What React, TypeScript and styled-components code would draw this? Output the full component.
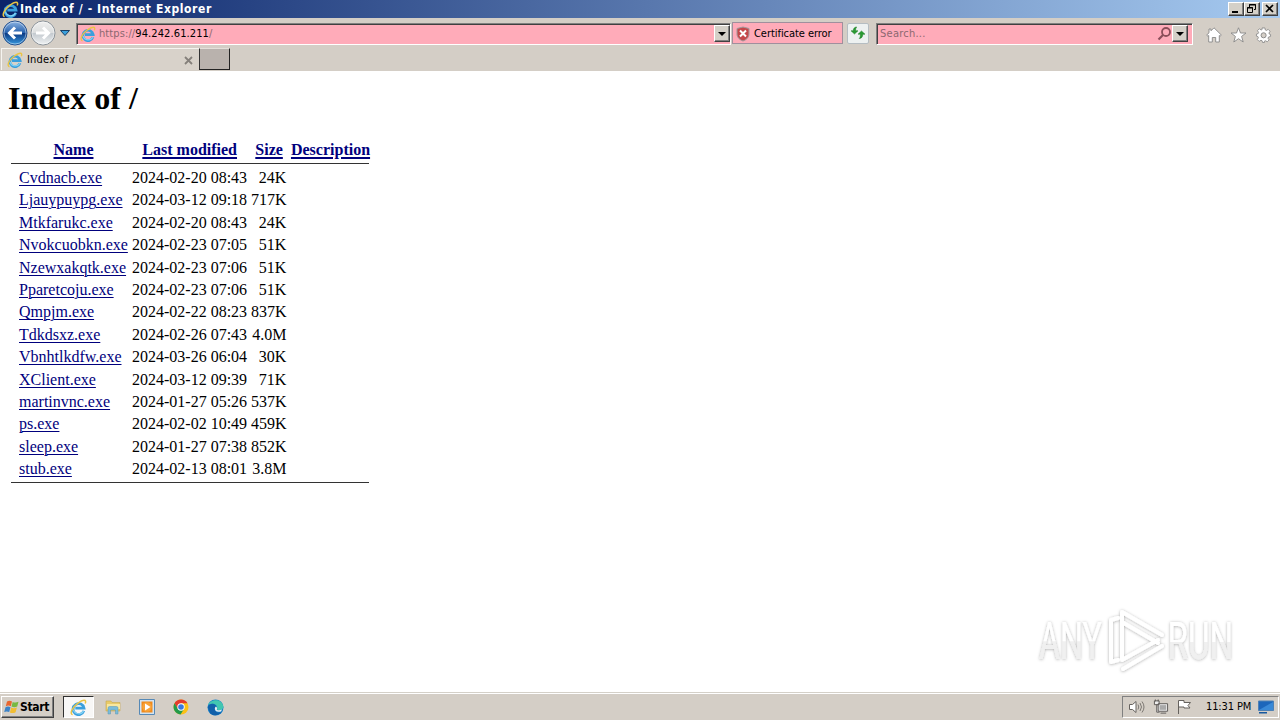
import React from "react";
import styled, { createGlobalStyle } from "styled-components";

const Global = createGlobalStyle`
  *{box-sizing:border-box}
  html,body{margin:0;padding:0}
  body{background:#fff;overflow:hidden}
`;
const ui = `"Tahoma","DejaVu Sans Condensed","DejaVu Sans",sans-serif`;

const Screen = styled.div`
  width:1280px;height:720px;display:flex;flex-direction:column;position:relative;
  background:#fff;overflow:hidden;font-family:${ui};font-size:11px;color:#000;
`;
const TitleBar = styled.header`
  height:18px;display:flex;align-items:center;padding:0 2px;flex:none;
  background:linear-gradient(90deg,#0a246a 0%,#0a246a 1%,#a6caf0 100%);
`;
const Label = styled.span<{ $ls?: number; $size?: number; $color?: string; $bold?: boolean; $ml?: number }>`
  white-space:pre;line-height:14px;margin-left:${p => p.$ml ?? 0}px;
  font-size:${p => p.$size ?? 11}px;letter-spacing:${p => p.$ls ?? 0}px;
  color:${p => p.$color ?? "#000"};font-weight:${p => (p.$bold ? 700 : 400)};
`;
const Spacer = styled.div`flex:1;`;
const WinButton = styled.div<{ $gap?: number }>`
  width:16px;height:14px;margin-left:${p => p.$gap ?? 0}px;background:#d4d0c8;
  border:1px solid;border-color:#fff #404040 #404040 #fff;box-shadow:inset -1px -1px #808080;
  display:flex;
`;
const NavBar = styled.nav`
  height:30px;flex:none;background:#d4cec6;display:flex;align-items:center;padding:0 7px 0 2px;
`;
const History = styled.div`display:flex;align-items:center;gap:2px;padding-right:2px;`;
const Field = styled.div<{ $w: number; $ml: number; $pr: number }>`
  width:${p => p.$w}px;height:22px;margin-left:${p => p.$ml}px;margin-top:1px;background:#ffabb9;
  border:1px solid;border-color:#808080 #fff #fff #808080;box-shadow:inset 1px 1px #404040;
  display:flex;align-items:center;padding:1px ${p => p.$pr}px 0 3px;
`;
const DropButton = styled.div`
  width:16px;height:17px;margin-top:-1px;background:#d4d0c8;border:1px solid;border-color:#fff #404040 #404040 #fff;
  box-shadow:inset -1px -1px #808080;display:flex;align-items:center;justify-content:center;
  &::after{content:"";border:4px solid transparent;border-top-color:#000;border-bottom:0;}
`;
const Certificate = styled.div`
  width:111px;height:22px;margin:0 0 0 1px;background:#ffabb9;border:1px solid #a08f9d;
  display:flex;align-items:center;gap:4px;padding:1px 0 0 3px;
`;
const Refresh = styled.div`
  width:22px;height:21px;margin:0 0 0 4px;border:1px solid #b5bdc2;border-radius:2px;background:#edf1f1;
  display:flex;align-items:center;justify-content:center;
`;
const Tools = styled.div`display:flex;align-items:center;gap:8px;margin:4px 0 0 13px;`;
const TabRow = styled.div`
  height:23px;flex:none;background:#d4cec6;display:flex;align-items:flex-start;
`;
const Tab = styled.div`
  width:199px;height:22px;display:flex;align-items:center;padding:1px 6px 0 5px;gap:4px;
  background:#d8d2ca;border-top:1px solid #f6f4f0;border-left:1px solid #f6f4f0;margin-left:1px;
  border-right:1px solid #404040;
`;
const NewTab = styled.div`
  width:31px;height:22px;background:#b9b2ad;border:1px solid;border-color:#e4e0da #222 #222 #333;
  margin-left:-1px;
`;
const Page = styled.main`
  height:621px;flex:none;background:#fff;padding:0 8px;
  font-family:"Liberation Serif","Times New Roman",serif;font-size:16px;
`;
const Heading = styled.h1`font-size:32px;line-height:36px;font-weight:700;margin:0;padding-top:9px;`;
const Listing = styled.section`width:358px;margin:23px 0 0 3px;`;
const Row = styled.div<{ $head?: boolean }>`
  display:grid;grid-template-columns:109px 115px 35.4px 79px;column-gap:4px;padding-left:8px;
  height:${p => (p.$head ? 24 : 22.4)}px;line-height:22px;white-space:nowrap;
  ${p => p.$head && "font-weight:700;text-align:center;column-gap:4.2px;"}
`;
const Link = styled.a<{ $heavy?: boolean }>`
  color:#00007d;text-decoration:underline;text-underline-offset:2px;
  text-decoration-thickness:${p => (p.$heavy ? 2 : 1)}px;
`;
const Size = styled.span`text-align:right;`;
const Rule = styled.div<{ $mt?: number; $mb?: number }>`
  height:1px;background:#333;margin:${p => p.$mt ?? 0}px 0 ${p => p.$mb ?? 0}px;
`;
const Taskbar = styled.footer`
  height:28px;flex:none;background:#d4cec6;border-top:1px solid #d4d0c8;box-shadow:inset 0 1px #fff;
  display:flex;align-items:center;padding:1px 1px 0 1px;
`;
const Start = styled.div`
  width:53px;height:22px;border:1px solid;border-color:#fff #404040 #404040 #fff;
  box-shadow:inset -1px -1px #808080;display:flex;align-items:center;padding-left:2px;
`;
const ActiveTask = styled.div`
  width:31px;height:22px;margin-left:9px;background:#f8f7f6;border:1px solid;
  border-color:#303030 #fff #fff #303030;display:flex;align-items:center;justify-content:center;
`;
const Tasks = styled.div`display:flex;gap:18px;margin-left:11px;align-items:center;`;
const Tray = styled.div`
  width:157px;height:22px;border:1px solid;border-color:#808080 #fff #fff #808080;
  display:flex;align-items:center;padding-left:5px;gap:7px;
`;
const Watermark = styled.svg`position:absolute;left:1020px;top:600px;overflow:visible;`;

const IE = ({ s = 16 }: { s?: number }) => (
  <svg width={s} height={s} viewBox="0 0 16 16" fill="none">
    <path d="M13 11.2A5.200 5.200 0 1 1 13.200 8.600H5" stroke="#3b9fdc" strokeWidth="2.6" />
    <path d="M12.800 11.200A5.200 5.200 0 0 1 3.200 10" stroke="#83d2f5" strokeWidth="1.1" />
    <path d="M2.500 14.700C-.4 14.300 1.500 8.300 7 4.300S16 .2 14.300 4.300" stroke="#eac445" strokeWidth="1.4" />
  </svg>
);
const Arrow = ({ back }: { back?: boolean }) => (
  <svg width="26" height="26" viewBox="0 0 26 26">
    <defs>
      <linearGradient id={back ? "bk" : "fw"} x1="0" y1="0" x2="0" y2="1">
        <stop offset="0" stopColor={back ? "#8fb6e4" : "#f0f0ef"} />
        <stop offset=".48" stopColor={back ? "#2963ae" : "#dcdedf"} />
        <stop offset=".52" stopColor={back ? "#0d3c86" : "#c4cacf"} />
        <stop offset="1" stopColor={back ? "#379be0" : "#f0f3f4"} />
      </linearGradient>
    </defs>
    <circle cx="13" cy="13" r="12" fill={`url(#${back ? "bk" : "fw"})`} stroke={back ? "#24508e" : "#8a9299"} />
    <circle cx="13" cy="13" r="11" fill="none" stroke="#fff" strokeOpacity=".45" />
    <path d={back ? "M20 13H8M13 7.5L7.5 13L13 18.5" : "M6 13H18M13 7.5L18.5 13L13 18.5"} fill="none" stroke="#fff" strokeWidth="3" />
  </svg>
);
const files: [string, string, string][] = [
  ["Cvdnacb.exe", "2024-02-20 08:43", "24K"],
  ["Ljauypuypg.exe", "2024-03-12 09:18", "717K"],
  ["Mtkfarukc.exe", "2024-02-20 08:43", "24K"],
  ["Nvokcuobkn.exe", "2024-02-23 07:05", "51K"],
  ["Nzewxakqtk.exe", "2024-02-23 07:06", "51K"],
  ["Pparetcoju.exe", "2024-02-23 07:06", "51K"],
  ["Qmpjm.exe", "2024-02-22 08:23", "837K"],
  ["Tdkdsxz.exe", "2024-02-26 07:43", "4.0M"],
  ["Vbnhtlkdfw.exe", "2024-03-26 06:04", "30K"],
  ["XClient.exe", "2024-03-12 09:39", "71K"],
  ["martinvnc.exe", "2024-01-27 05:26", "537K"],
  ["ps.exe", "2024-02-02 10:49", "459K"],
  ["sleep.exe", "2024-01-27 07:38", "852K"],
  ["stub.exe", "2024-02-13 08:01", "3.8M"],
];
const columns = ["Name", "Last modified", "Size", "Description"];

export default function App() {
  return (
    <Screen>
      <Global />
      <TitleBar>
        <IE s={17} />
        <Label $bold $color="#fff" $size={12} $ls={0.6} $ml={1}>Index of / - Internet Explorer</Label>
        <Spacer />
        <WinButton><svg width="14" height="12"><path d="M3 9h6" stroke="#000" strokeWidth="2" /></svg></WinButton>
        <WinButton><svg width="14" height="12" fill="none" stroke="#000"><path d="M4.5 4V1.5h6v5H9M4 2h7M2.5 4.5h5v5h-5zM2 5h6" /></svg></WinButton>
        <WinButton $gap={2}><svg width="14" height="12"><path d="M3 2l7 7M10 2l-7 7" stroke="#000" strokeWidth="1.7" /></svg></WinButton>
      </TitleBar>
      <NavBar>
        <History>
          <Arrow back />
          <Arrow />
          <svg width="14" height="8" viewBox="0 0 14 8"><path d="M2.500 1.500h9L7 6.500z" fill="#3aa0dc" stroke="#173f66" /></svg>
        </History>
        <Field $w={655} $ml={2} $pr={0}>
          <IE />
          <Label $color="#8c6870" $ls={0.1} $ml={3}>https://</Label>
          <Label $ls={0.1}>94.242.61.211</Label>
          <Label $color="#8c6870">/</Label>
          <Spacer />
          <DropButton />
        </Field>
        <Certificate>
          <svg width="14" height="16" viewBox="0 0 14 16">
            <path d="M7 1L13 2.500V8C13 11.500 10 14 7 15C4 14 1 11.500 1 8V2.500z" fill="#c5474b" stroke="#a09a9c" />
            <path d="M4 4.500l6 6M10 4.500l-6 6" stroke="#fff" strokeWidth="2" />
          </svg>
          <Label $ls={-0.05}>Certificate error</Label>
        </Certificate>
        <Refresh>
          <svg width="16" height="14" viewBox="0 0 16 14">
            <path d="M4.5 8L1 4.800h2.200C3.300 2.500 4.500 1 6.800 1 5.700 2 5.600 3 5.700 4.800H8zM11.500 5L15 8.200h-2.200c-.1 2.800-1.300 4.300-3.600 4.300 1.100-1 1.200-2.300 1.100-4.300H8z" fill="#289b32" stroke="#16781f" strokeWidth=".5" />
          </svg>
        </Refresh>
        <Field $w={317} $ml={7} $pr={4}>
          <Label $color="#8c6870" $ls={0.25}>Search...</Label>
          <Spacer />
          <svg width="15" height="16" viewBox="0 0 15 16" fill="none" stroke="#8b4e59" strokeWidth="1.8"><circle cx="9" cy="6" r="4" /><path d="M6 9L1.500 13.500" strokeWidth="2.2" /></svg>
          <DropButton />
        </Field>
        <Tools>
          <svg width="16" height="16" viewBox="0 0 16 16" fill="#fff" stroke="#888" strokeWidth=".9"><path d="M8 .8L15.300 8l-1.200 1.200-.8-.7V15H9.700v-4.500H6.300V15H2.700V8.500l-.8.7L.7 8 3 5.800V2h2v1.800z" /></svg>
          <svg width="17" height="16" viewBox="0 0 17 16" fill="#fff" stroke="#888" strokeWidth=".9"><path d="M8.500.8L10.500 6H16l-4.400 3.400 1.600 5.600-4.700-3.300L3.800 15l1.600-5.600L1 6h5.500z" /></svg>
          <svg width="17" height="16" viewBox="0 0 17 17"><path d="M7 1h3l.4 2.100 1.200.6 1.900-1.200 2 2-1.200 1.900.5 1.200L16 8v2l-2.200.7-.5 1.200 1.200 1.800-2 2-1.900-1.100-1.200.5L9.500 16.500H7.500L7 14.600l-1.200-.5-1.900 1.200-2-2 1.200-1.900-.5-1.200L1 9.700V7.500L2.800 7l.5-1.200-1.200-1.900 2-2L6 3.200l1-.5z" fill="#fff" stroke="#888" strokeWidth=".9" /><circle cx="8.600" cy="8.800" r="2.700" fill="#d4cec6" stroke="#888" /></svg>
        </Tools>
      </NavBar>
      <TabRow>
        <Tab>
          <IE />
          <Label $ls={0.2}>Index of /</Label>
          <Spacer />
          <svg width="9" height="9"><path d="M1 1l7 7M8 1l-7 7" stroke="#85807b" strokeWidth="1.8" /></svg>
        </Tab>
        <NewTab />
      </TabRow>
      <Page>
        <Heading>Index of /</Heading>
        <Listing>
          <Row $head>{columns.map(c => <span key={c}><Link $heavy>{c}</Link></span>)}</Row>
          <Rule $mb={3} />
          {files.map(([name, date, size]) => (
            <Row key={name}><span><Link>{name}</Link></span><span>{date}</span><Size>{size}</Size></Row>
          ))}
          <Rule $mt={1.4} />
        </Listing>
      </Page>
      <Taskbar>
        <Start>
          <svg width="16" height="16" viewBox="0 0 16 16">
            <path d="M3 2.500Q5.500 1 8 2.500L6.800 7.200Q4.300 6 1.800 7.300z" fill="#e9662f" />
            <path d="M8.700 3Q11.500 4.200 14.500 2.700L13.200 7.500Q10.500 9 7.500 7.600z" fill="#77b943" />
            <path d="M1.500 8.200Q4 7 6.500 8.200L5.200 13Q2.700 11.800.2 13z" fill="#3c83c8" />
            <path d="M7.200 8.600Q10 9.900 12.900 8.500L11.600 13.200Q8.700 14.800 5.900 13.400z" fill="#f1bd33" />
          </svg>
          <Label $bold $size={12} $ls={-0.3}>Start</Label>
        </Start>
        <ActiveTask><IE s={17} /></ActiveTask>
        <Tasks>
          <svg width="16" height="16" viewBox="0 0 16 16"><path d="M1 2h5l1 1.500h8V12H1z" fill="#e9cb69" stroke="#c7a84e" strokeWidth=".6" /><path d="M2 5h13v5H2z" fill="#f8e7a0" /><path d="M3 15V9q0-1.500 1.500-1.500h7Q13 7.500 13 9v6h-2.500v-4h-5v4z" fill="#7bbcd9" stroke="#5994b2" strokeWidth=".5" /></svg>
          <svg width="16" height="16" viewBox="0 0 16 16"><path d="M.5 .5h15v15H.5z" fill="#d2e3f1" stroke="#5689b6" /><path d="M2.500 2.500h11v11h-11z" fill="#f08a1c" /><circle cx="8" cy="8" r="4.800" fill="#f7a238" /><path d="M6 4.500L11.500 8L6 11.500z" fill="#fff" /></svg>
          <svg width="16" height="16" viewBox="0 0 16 16"><circle cx="8" cy="8" r="7.500" fill="#fbc116" /><path d="M8 8L4.700 9.800 1.500 4.300A7.500 7.500 0 0 1 14.500 4.300H8z" fill="#e33b2e" /><path d="M1.500 4.300A7.500 7.500 0 0 0 7.500 15.500L11 10 5 9.900z" fill="#229a4b" /><circle cx="8" cy="8" r="3.700" fill="#fff" /><circle cx="8" cy="8" r="2.800" fill="#3979df" /></svg>
          <svg width="17" height="17" viewBox="0 0 17 17"><circle cx="8.500" cy="8.500" r="8" fill="#1681ca" /><path d="M1 6C3 1 14-2 16.500 7.500 16.500 11 12 12 10 10.500 11.500 6 6 3 1 6z" fill="#42c6b0" /><path d="M.7 8C3 3.500 9 4 9.700 8.500 8 8 7 10 8.500 12S13 14 15 12.500C12 17 6 17.500 3 14z" fill="#1260a9" /><path d="M9 7.500Q11 9 9.800 10.700 12 12 15 10.500L14 12.500Q10 13.500 8.400 11.500 7 9 9 7.500z" fill="#e8eef0" /></svg>
        </Tasks>
        <Spacer />
        <Tray>
          <svg width="18" height="16" viewBox="0 0 18 16" fill="#fff" stroke="#66625e"><path d="M1.500 5.500h3L8 2.500v11l-3.500-3h-3z" /><path d="M10 5.500q1.500 2.500 0 5M12 4q3 4 0 8M14 2.500q4 5.500 0 11" fill="none" strokeWidth=".8" /></svg>
          <svg width="16" height="16" viewBox="0 0 17 16" fill="#eee" stroke="#5b5855"><path d="M5.500 4.500h10v8h-10zM8 14.500h6M1.500 1.500h5v4h-5zM4 5.500v8h3M2.500 0v2M5.500 0v2" /><path d="M7 6h7v5H7z" fill="#aaa" stroke="none" /></svg>
          <svg width="17" height="16" viewBox="0 0 17 16" fill="#fff" stroke="#66625e"><path d="M2.500 15V1.500H8v2h6.500L12 6.500l2 2.500H8V8H2.500" /></svg>
          <Label $ls={-0.12} $ml={6}>11:31 PM</Label>
          <svg width="16" height="14" viewBox="0 0 16 14"><path d="M.5 1h15v9.500H.5z" fill="#1c66bb" stroke="#4f81b4" /><path d="M1 10L15 2v8z" fill="#3989d7" /><path d="M1 12h8v1.500H1z" fill="#17589e" /></svg>
        </Tray>
      </Taskbar>
      <Watermark width="230" height="80" viewBox="0 0 230 80">
        <defs>
          <filter id="sh" x="-10%" y="-20%" width="120%" height="140%"><feDropShadow dx="0" dy="0.5" stdDeviation="1.8" floodColor="#000" floodOpacity=".33" /></filter>
          <linearGradient id="wm" x1="0" y1="0" x2="0" y2="1"><stop offset=".5" stopColor="#fff" /><stop offset=".51" stopColor="#f0f0f0" /></linearGradient>
        </defs>
        <g filter="url(#sh)" fill="url(#wm)" fontFamily="Roboto, sans-serif" fontSize="51" fontWeight="400">
          <text transform="translate(19 59) scale(.63 1)">ANY</text>
          <text transform="translate(147.500 59) scale(.65 1)">RUN</text>
          <g fill="none" stroke="#fff" strokeWidth="4" strokeLinejoin="round" strokeLinecap="round">
            <path d="M102 46V12L142 35M98 18L91 20V62L98 60M102 22L138 43M102 28V60L138 40M103 69L142 46" />
          </g>
        </g>
      </Watermark>
    </Screen>
  );
}
